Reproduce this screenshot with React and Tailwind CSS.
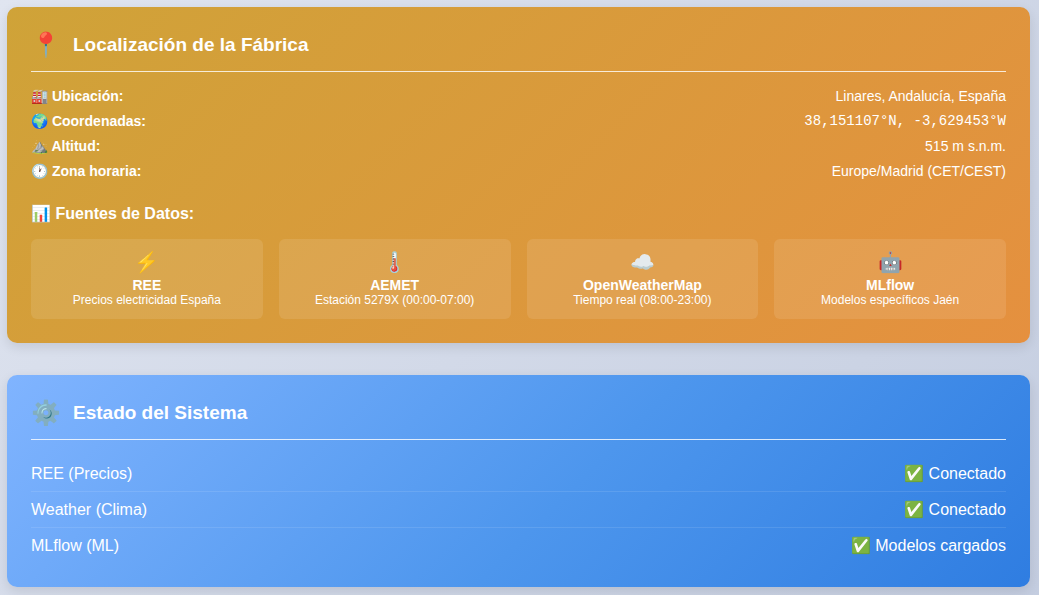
const locationRows = [
  { icon: "🏭", label: "Ubicación:", value: "Linares, Andalucía, España" },
  { icon: "🌍", label: "Coordenadas:", value: "38,151107°N, -3,629453°W", mono: true },
  { icon: "⛰️", label: "Altitud:", value: "515 m s.n.m." },
  { icon: "🕐", label: "Zona horaria:", value: "Europe/Madrid (CET/CEST)" },
];

const sources = [
  { icon: "⚡", name: "REE", detail: "Precios electricidad España" },
  { icon: "🌡️", name: "AEMET", detail: "Estación 5279X (00:00-07:00)" },
  { icon: "☁️", name: "OpenWeatherMap", detail: "Tiempo real (08:00-23:00)" },
  { icon: "🤖", name: "MLflow", detail: "Modelos específicos Jaén" },
];

const services = [
  { name: "REE (Precios)", status: "✅ Conectado" },
  { name: "Weather (Clima)", status: "✅ Conectado" },
  { name: "MLflow (ML)", status: "✅ Modelos cargados" },
];

function CardHeader({ icon, title }) {
  return (
    <header className="mb-4 flex items-center gap-3 border-b border-white/80 pb-3">
      <span className="text-2xl leading-7" aria-hidden="true">{icon}</span>
      <h2 className="text-[19px] leading-7 font-bold">{title}</h2>
    </header>
  );
}

export default function App() {
  return (
    <main className="flex min-h-screen flex-col gap-8 bg-linear-135 from-[#e0e5f0] to-[#c4cde0] pt-[7px] pr-[9px] pb-2 pl-[7px] font-['Liberation_Sans',Arial,sans-serif] text-white">
      <section className="rounded-[10px] bg-linear-135/srgb from-[#cfa338] to-[#e5903f] p-6 shadow-[0_4px_12px_rgba(0,0,0,0.1)]">
        <CardHeader icon="📍" title="Localización de la Fábrica" />
        <dl className="flex flex-col gap-2">
          {locationRows.map((row) => (
            <div key={row.label} className="flex justify-between text-[14px] leading-[17px]">
              <dt className="font-bold">{row.icon} {row.label}</dt>
              <dd className={row.mono ? "font-['Liberation_Mono',monospace]" : ""}>{row.value}</dd>
            </div>
          ))}
        </dl>
        <h3 className="mt-6 mb-4 text-base leading-[19px] font-bold">📊 Fuentes de Datos:</h3>
        <ul className="grid grid-cols-4 gap-4">
          {sources.map((source) => (
            <li key={source.name} className="flex flex-col items-center rounded-md bg-white/10 p-3 text-center">
              <span className="mb-1 text-xl leading-[22px]" aria-hidden="true">{source.icon}</span>
              <strong className="text-[14px] leading-4">{source.name}</strong>
              <span className="text-xs leading-[14px]">{source.detail}</span>
            </li>
          ))}
        </ul>
      </section>

      <section className="rounded-[10px] bg-linear-135/srgb from-[#80b4ff] via-[#4d96ed] via-55% to-[#2f7de1] p-6 shadow-[0_4px_12px_rgba(0,0,0,0.1)]">
        <CardHeader icon="⚙️" title="Estado del Sistema" />
        <ul>
          {services.map((service) => (
            <li key={service.name} className="flex justify-between border-b border-white/10 py-2 text-base leading-[19px] last:border-b-0">
              <span>{service.name}</span>
              <span>{service.status}</span>
            </li>
          ))}
        </ul>
      </section>
    </main>
  );
}
